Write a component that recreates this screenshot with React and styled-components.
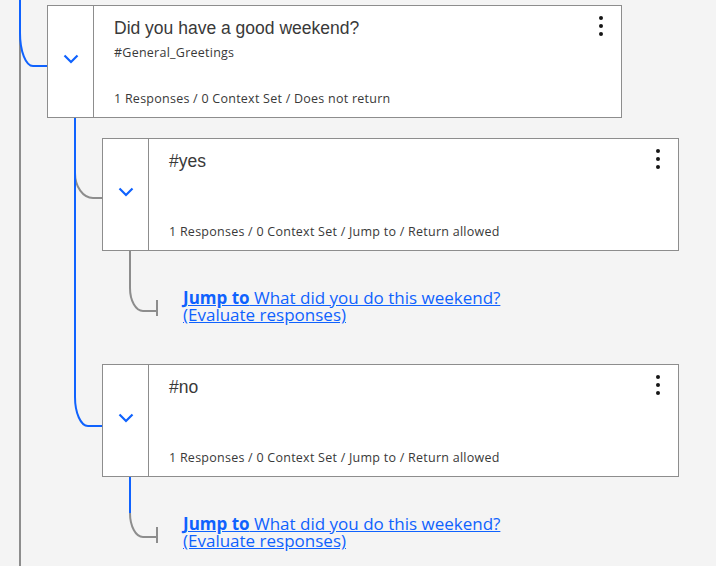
import React from "react";
import styled, { createGlobalStyle } from "styled-components";

const GlobalStyle = createGlobalStyle`
  html, body { margin: 0; padding: 0; background: #f4f4f4; }
  body { font-family: "Open Sans", "Liberation Sans", Arial, sans-serif; }
`;

const Page = styled.div`
  position: relative;
  width: 716px;
  height: 566px;
  overflow: hidden;
  box-sizing: border-box;
  padding: 5px 0 0 47px;
  background: #f4f4f4;
`;

const Wires = styled.svg`
  position: absolute;
  left: 0;
  top: 0;
  pointer-events: none;
`;

const Card = styled.div`
  position: relative;
  display: flex;
  box-sizing: border-box;
  width: ${(p) => p.$width}px;
  height: 113px;
  margin-top: ${(p) => p.$top || 0}px;
  border: 1px solid #8d8d8d;
  background: #fff;
`;

const Toggle = styled.button`
  flex: 0 0 46px;
  box-sizing: border-box;
  margin: 0;
  padding: 0 0 5px;
  border: 0;
  border-right: 1px solid #8d8d8d;
  background: #fff;
  display: flex;
  align-items: center;
  justify-content: center;
  cursor: pointer;
`;

const Body = styled.div`
  flex: 1;
  min-width: 0;
  display: flex;
  flex-direction: column;
  padding: 10px 20px 10px 20px;
`;

const Title = styled.div`
  font-family: "Liberation Sans", Arial, sans-serif;
  font-size: 17.5px;
  line-height: 24px;
  color: #393939;
`;

const Tag = styled.div`
  margin-top: 5px;
  font-size: 12.5px;
  line-height: 16px;
  letter-spacing: 0.25px;
  color: #393939;
`;

const Meta = styled.div`
  margin-top: auto;
  font-size: 12.5px;
  line-height: 16px;
  letter-spacing: 0.25px;
  color: #393939;
`;

const Kebab = styled.button`
  align-self: flex-start;
  flex: 0 0 32px;
  width: 32px;
  height: 32px;
  margin: 4px 4px 0 0;
  padding: 0;
  border: 0;
  background: transparent;
  cursor: pointer;
  svg { display: block; }
`;

const Children = styled.div`
  display: flex;
  flex-direction: column;
  align-items: flex-start;
  margin: 20px 0 0 55px;
`;

const JumpLink = styled.a`
  display: block;
  margin: ${(p) => p.$top}px 0 0 81px;
  font-size: 17px;
  line-height: 17px;
  color: #0f62fe;
  text-decoration: underline;
  cursor: pointer;
  b { font-weight: 700; }
`;

const Chevron = () => (
  <svg width="16" height="10" viewBox="0 0 16 10" aria-hidden="true">
    <polyline
      points="1.5,1.5 8,8 14.5,1.5"
      fill="none"
      stroke="#0f62fe"
      strokeWidth="2.2"
    />
  </svg>
);

const Dots = () => (
  <svg width="32" height="32" viewBox="0 0 32 32" aria-hidden="true">
    <circle cx="16" cy="8" r="2" fill="#161616" />
    <circle cx="16" cy="16" r="2" fill="#161616" />
    <circle cx="16" cy="24" r="2" fill="#161616" />
  </svg>
);

const Node = ({ width, top, title, tag, meta }) => (
  <Card $width={width} $top={top}>
    <Toggle aria-label="Expand">
      <Chevron />
    </Toggle>
    <Body>
      <Title>{title}</Title>
      {tag && <Tag>{tag}</Tag>}
      <Meta>{meta}</Meta>
    </Body>
    <Kebab aria-label="Options">
      <Dots />
    </Kebab>
  </Card>
);

const Jump = ({ top }) => (
  <JumpLink $top={top}>
    <b>Jump to</b> What did you do this weekend?
    <br />
    (Evaluate responses)
  </JumpLink>
);

const GRAY = "#8d8d8d";
const BLUE = "#0f62fe";

export default function App() {
  return (
    <>
      <GlobalStyle />
      <Page>
        <Wires width="716" height="566" viewBox="0 0 716 566">
          <g fill="none" strokeWidth="2">
            <path d="M20 0 V566" stroke={GRAY} />
            <path d="M75 173 A18 25 0 0 0 93 198 H102" stroke={GRAY} />
            <path d="M130 250 V288 A13 23 0 0 0 143 311 H157" stroke={GRAY} />
            <path d="M157 300 V316" stroke={GRAY} />
            <path d="M130 513 A13 24 0 0 0 143 537 H157" stroke={GRAY} />
            <path d="M157 527 V543" stroke={GRAY} />
            <path d="M20 0 V33 A13 33 0 0 0 33 66 H47" stroke={BLUE} />
            <path d="M75 117 V397 A13 29 0 0 0 88 426 H102" stroke={BLUE} />
            <path d="M130 476 V513" stroke={BLUE} />
          </g>
        </Wires>
        <Node
          width={575}
          title="Did you have a good weekend?"
          tag="#General_Greetings"
          meta="1 Responses / 0 Context Set / Does not return"
        />
        <Children>
          <Node
            width={577}
            title="#yes"
            meta="1 Responses / 0 Context Set / Jump to / Return allowed"
          />
          <Jump top={38} />
          <Node
            width={577}
            top={41}
            title="#no"
            meta="1 Responses / 0 Context Set / Jump to / Return allowed"
          />
          <Jump top={38} />
        </Children>
      </Page>
    </>
  );
}
